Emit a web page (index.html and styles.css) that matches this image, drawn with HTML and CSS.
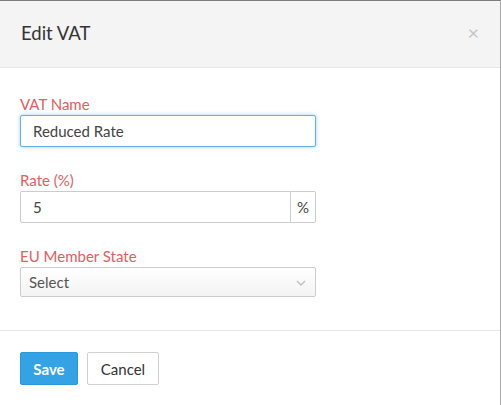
FILE: index.html
```html
<!DOCTYPE html>
<html>
<head>
<meta charset="utf-8">
<link rel="stylesheet" href="styles.css">
</head>
<body>
<div class="modal">
  <div class="modal-header">
    <h4 class="modal-title">Edit VAT</h4>
    <span class="close">&times;</span>
  </div>
  <div class="modal-body">
    <div class="field">
      <label class="label">VAT Name</label>
      <div class="input focus">Reduced Rate</div>
    </div>
    <div class="field">
      <label class="label">Rate (%)</label>
      <div class="input-group">
        <div class="input grow">5</div>
        <div class="addon">%</div>
      </div>
    </div>
    <div class="field">
      <label class="label">EU Member State</label>
      <div class="select">
        <span>Select</span>
        <svg class="chev" width="10" height="6" viewBox="0 0 10 6"><path d="M1 1 L5 5 L9 1" fill="none" stroke="#bdbdbd" stroke-width="1.3"/></svg>
      </div>
    </div>
  </div>
  <div class="modal-footer">
    <button class="btn btn-primary">Save</button>
    <button class="btn btn-default">Cancel</button>
  </div>
</div>
</body>
</html>
```
FILE: styles.css
```css
html, body { margin: 0; padding: 0; background: #fff; }
body { font-family: Lato, "Open Sans", Arial, sans-serif; color: #333; }
.modal {
  width: 500px;
  height: 404px;
  border-top: 1px solid #7d7d7d;
  border-right: 1px solid #a8a8a8;
  display: flex;
  flex-direction: column;
}
.modal-header {
  height: 67px;
  background: #f4f4f4;
  border-bottom: 1px solid #e6e6e6;
  display: flex;
  align-items: center;
  justify-content: space-between;
  padding: 0 21px;
  box-sizing: border-box;
}
.modal-title { margin: 0; font-size: 18.5px; font-weight: 400; color: #333; padding-bottom: 2px; }
.close { color: #c6c6c6; font-size: 20px; line-height: 1; margin-top: -4px; margin-right: 0; }
.modal-body {
  height: 263px;
  box-sizing: border-box;
  padding: 26px 20px 0 20px;
  border-bottom: 1px solid #e6e6e6;
}
.field { width: 296px; margin-bottom: 23px; }
.label { display: block; font-size: 15px; line-height: 20px; color: #e0605f; margin-bottom: 1px; }
.input {
  height: 32px;
  box-sizing: border-box;
  border: 1px solid #ccc;
  border-radius: 2px;
  font-size: 15px;
  line-height: 30px;
  padding: 0 12px;
  color: #444;
  background: #fff;
}
.input.focus {
  border-color: #66afe9;
  box-shadow: 0 0 4px rgba(102,175,233,0.6);
}
.input-group { display: flex; }
.input.grow { flex: 1; border-radius: 2px 0 0 2px; }
.addon {
  width: 25px;
  height: 32px;
  box-sizing: border-box;
  border: 1px solid #ccc;
  border-left: none;
  border-radius: 0 2px 2px 0;
  font-size: 15px;
  line-height: 30px;
  text-align: center;
  color: #444;
}
.select {
  height: 30px;
  box-sizing: border-box;
  border: 1px solid #ccc;
  border-radius: 2px;
  background: linear-gradient(#fff, #f3f3f3);
  display: flex;
  align-items: center;
  justify-content: space-between;
  padding: 0 9px 0 8px;
  font-size: 15px;
  color: #555;
}
.chev { margin-top: 1px; }
.modal-footer {
  flex: 1;
  padding: 21px 20px 0 20px;
  display: flex;
  align-items: flex-start;
  gap: 9px;
}
.btn {
  height: 33px;
  box-sizing: border-box;
  border-radius: 2px;
  font-family: Lato, "Open Sans", Arial, sans-serif;
  font-size: 15px;
  padding: 0;
  cursor: pointer;
}
.btn-primary { width: 58px; background: #33a3e5; border: 1px solid #2c98d8; color: #fff; font-weight: 700; }
.btn-default { width: 72px; background: #fff; border: 1px solid #d0d0d0; color: #333; }
```
